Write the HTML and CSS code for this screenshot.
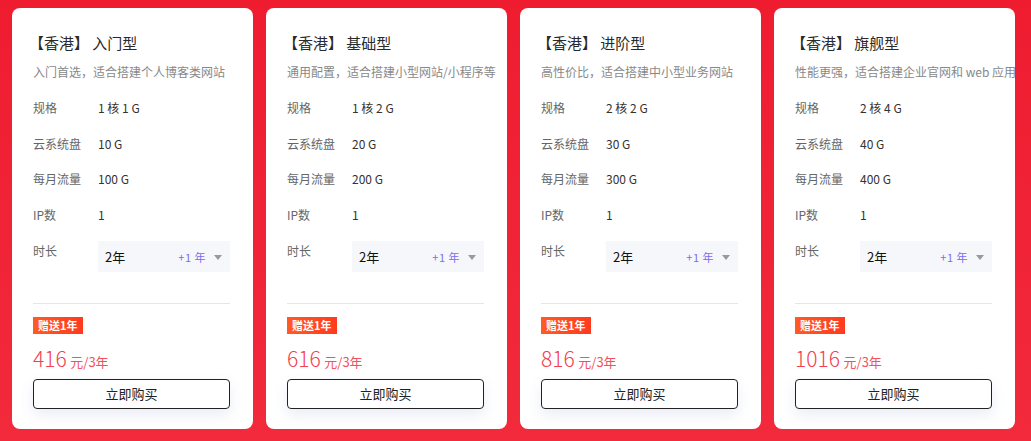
FILE: index.html
```html
<!DOCTYPE html>
<html lang="zh-CN">
<head>
<meta charset="utf-8">
<link rel="stylesheet" href="styles.css">
</head>
<body>
<div class="wrap">
  <div class="card">
    <div class="title">【香港】 入门型</div>
    <div class="desc">入门首选，适合搭建个人博客类网站</div>
    <div class="row"><span class="lab">规格</span><span class="val">1 核 1 G</span></div>
    <div class="row"><span class="lab">云系统盘</span><span class="val">10 G</span></div>
    <div class="row"><span class="lab">每月流量</span><span class="val">100 G</span></div>
    <div class="row"><span class="lab">IP数</span><span class="val">1</span></div>
    <div class="row row-sel"><span class="lab">时长</span><div class="sel"><span class="sv">2年</span><span class="plus">+1 年</span><span class="caret"></span></div></div>
    <div class="divider"></div>
    <div class="badge">赠送1年</div>
    <div class="price"><span class="num">416</span> <span class="unit">元/3年</span></div>
    <div class="btn">立即购买</div>
  </div>
  <div class="card">
    <div class="title">【香港】 基础型</div>
    <div class="desc">通用配置，适合搭建小型网站/小程序等</div>
    <div class="row"><span class="lab">规格</span><span class="val">1 核 2 G</span></div>
    <div class="row"><span class="lab">云系统盘</span><span class="val">20 G</span></div>
    <div class="row"><span class="lab">每月流量</span><span class="val">200 G</span></div>
    <div class="row"><span class="lab">IP数</span><span class="val">1</span></div>
    <div class="row row-sel"><span class="lab">时长</span><div class="sel"><span class="sv">2年</span><span class="plus">+1 年</span><span class="caret"></span></div></div>
    <div class="divider"></div>
    <div class="badge">赠送1年</div>
    <div class="price"><span class="num">616</span> <span class="unit">元/3年</span></div>
    <div class="btn">立即购买</div>
  </div>
  <div class="card">
    <div class="title">【香港】 进阶型</div>
    <div class="desc">高性价比，适合搭建中小型业务网站</div>
    <div class="row"><span class="lab">规格</span><span class="val">2 核 2 G</span></div>
    <div class="row"><span class="lab">云系统盘</span><span class="val">30 G</span></div>
    <div class="row"><span class="lab">每月流量</span><span class="val">300 G</span></div>
    <div class="row"><span class="lab">IP数</span><span class="val">1</span></div>
    <div class="row row-sel"><span class="lab">时长</span><div class="sel"><span class="sv">2年</span><span class="plus">+1 年</span><span class="caret"></span></div></div>
    <div class="divider"></div>
    <div class="badge">赠送1年</div>
    <div class="price"><span class="num">816</span> <span class="unit">元/3年</span></div>
    <div class="btn">立即购买</div>
  </div>
  <div class="card">
    <div class="title">【香港】 旗舰型</div>
    <div class="desc">性能更强，适合搭建企业官网和 web 应用</div>
    <div class="row"><span class="lab">规格</span><span class="val">2 核 4 G</span></div>
    <div class="row"><span class="lab">云系统盘</span><span class="val">40 G</span></div>
    <div class="row"><span class="lab">每月流量</span><span class="val">400 G</span></div>
    <div class="row"><span class="lab">IP数</span><span class="val">1</span></div>
    <div class="row row-sel"><span class="lab">时长</span><div class="sel"><span class="sv">2年</span><span class="plus">+1 年</span><span class="caret"></span></div></div>
    <div class="divider"></div>
    <div class="badge">赠送1年</div>
    <div class="price"><span class="num">1016</span> <span class="unit">元/3年</span></div>
    <div class="btn">立即购买</div>
  </div>
</div>
</body>
</html>
```
FILE: styles.css
```css
html, body {
  margin: 0;
  padding: 0;
  background: #f0213a;
  font-family: "Noto Sans CJK SC", "Noto Sans", sans-serif;
}
.wrap {
  display: flex;
  gap: 13px;
  padding: 8px 0 0 12px;
  height: 441px;
  box-sizing: border-box;
  background: linear-gradient(180deg, #ef1c30 0%, #f22a3c 100%);
}
.card {
  width: 241px;
  height: 421px;
  box-sizing: border-box;
  background: #fff;
  border-radius: 8px;
  padding: 23px 22px 0 21px;
  display: flex;
  flex-direction: column;
}
.title {
  font-size: 15px;
  line-height: 24px;
  color: #2a2a2a;
  margin-left: -4px;
}
.desc {
  font-size: 12px;
  line-height: 18px;
  color: #888;
  margin-top: 8px;
  white-space: nowrap;
}
.row {
  display: flex;
  font-size: 12px;
  line-height: 20px;
  margin-top: 15.5px;
}
.desc + .row { margin-top: 17px; }
.lab {
  width: 65px;
  flex: none;
  color: #666;
}
.val {
  color: #333;
}
.row-sel { margin-top: 16px; }
.sel {
  flex: 1;
  height: 31px;
  background: #f5f7fa;
  display: flex;
  align-items: center;
  padding: 0 8px 0 7px;
  box-sizing: border-box;
  margin-right: 1px;
}
.sv {
  font-size: 13px;
  color: #111;
  flex: 1;
  padding-top: 2px;
}
.plus {
  font-size: 11px;
  color: #7b6cf0;
  margin-right: 8px;
  padding-top: 1px;
  letter-spacing: 0.5px;
}
.caret {
  width: 0;
  height: 0;
  border-left: 4px solid transparent;
  border-right: 4px solid transparent;
  border-top: 5px solid #999;
  margin-top: 2px;
}
.divider {
  height: 1px;
  background: #e5e6ea;
  margin-top: 31px;
  margin-right: 1px;
}
.badge {
  align-self: flex-start;
  margin-top: 13px;
  height: 17px;
  line-height: 17px;
  padding: 0 5px;
  font-size: 11px;
  font-weight: 700;
  color: #fff;
  background: linear-gradient(90deg, #ff5b24 0%, #ff3a1f 100%);
}
.price {
  margin-top: 10px;
  line-height: 28px;
  height: 28px;
  color: #f3404f;
  white-space: nowrap;
}
.num {
  font-size: 21px;
  font-weight: 300;
}
.unit {
  font-size: 13px;
  color: #f4505d;
}
.btn {
  margin-top: 7px;
  height: 30px;
  box-sizing: border-box;
  border: 1px solid #222;
  border-radius: 4px;
  display: flex;
  align-items: center;
  justify-content: center;
  font-size: 13px;
  color: #222;
  margin-right: 1px;
  box-shadow: 0 6px 14px rgba(90, 110, 170, 0.12);
}
```
